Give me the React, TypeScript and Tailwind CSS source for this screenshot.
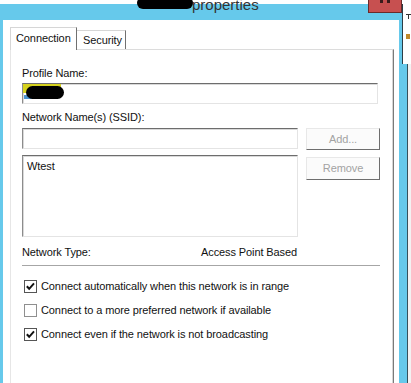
import React from "react";

const sunken =
  "border-t border-l border-r border-b border-t-[#6d6d6d] border-l-[#8c8c8c] border-r-[#e4e4e4] border-b-[#e4e4e4] shadow-[inset_1px_1px_0_#d9d9d9] bg-white";
const raised =
  "border border-t-[#e8e8e8] border-l-[#e8e8e8] border-r-[#6e6e6e] border-b-[#6e6e6e] bg-[#fbfbfb] text-[#a3a3a3] flex items-center justify-center";

function Check({ checked, label }: { checked: boolean; label: string }) {
  return (
    <div className="h-[24px] flex items-center">
      <div
        className={
          "ml-[2px] w-[13px] h-[13px] border bg-white flex items-center justify-center " +
          (checked ? "border-[#555555]" : "border-[#8f8f8f]")
        }
      >
        {checked && (
          <svg width="11" height="11" viewBox="0 0 11 11">
            <polyline points="1.8,5.2 4.2,7.8 9,2.4" fill="none" stroke="#111" strokeWidth="2" />
          </svg>
        )}
      </div>
      <span className="ml-[4px]">{label}</span>
    </div>
  );
}

export default function App() {
  return (
    <div className="relative w-[411px] h-[383px] overflow-hidden bg-white font-['Liberation_Sans',Arial,sans-serif] text-[11px] tracking-[-0.1px] leading-[13px] text-[#111]">
      <div className="flex flex-col h-full">
        <div className="h-[4px] shrink-0 bg-white" />
        <div className="flex flex-1 min-h-0">
          <div className="w-[408px] bg-[#66c9eb] border-r border-[#37505a] flex flex-col">
            <div className="h-[16px] shrink-0" />
            <div className="flex-1 ml-[3px] mr-[8px] bg-white flex flex-col pt-[7px] pl-[7px] pr-[5px]">
              {/* tabs */}
              <div className="flex h-[23px] mb-[-1px] relative z-10">
                <div className="w-[67px] h-[23px] bg-white border-t border-l border-r border-t-[#d6d6d6] border-l-[#d6d6d6] border-r-[#707070] pt-[4px] pl-[5px]">
                  Connection
                </div>
                <div className="w-[49px] h-[19px] mt-[3px] bg-white border-t border-r border-t-[#d6d6d6] border-r-[#707070] pt-[3px] pl-[6px]">
                  Security
                </div>
              </div>
              {/* panel */}
              <div className="flex-1 border-t border-l border-r border-t-[#dcdcdc] border-l-[#e6e6e6] border-r-[#7a7a7a] shadow-[inset_-1px_0_0_#d6d6d6] pl-[11px] flex flex-col">
                <div className="mt-[17px]">Profile Name:</div>
                <div className={"mt-[3px] w-[356px] h-[21px] relative " + sunken}>
                  <div className="absolute left-[0px] top-[0px] w-[38px] h-[9px] bg-[#d6d21e]" />
                  <div className="absolute left-[1px] top-[11px] w-[22px] h-[4px] bg-[#4d94d0]" />
                  <div className="absolute left-[3px] top-[2px] w-[38px] h-[13px] rounded-full bg-black" />
                </div>
                <div className="mt-[7px]">Network Name(s) (SSID):</div>
                <div className="mt-[4px] flex items-start">
                  <div className={"w-[276px] h-[21px] " + sunken} />
                  <div className={"ml-[8px] w-[74px] h-[22px] " + raised}>Add...</div>
                </div>
                <div className="mt-[5px] flex items-start">
                  <div className={"w-[276px] h-[82px] pt-[4px] pl-[4px] " + sunken}>Wtest</div>
                  <div className={"ml-[8px] mt-[2px] w-[74px] h-[23px] " + raised}>Remove</div>
                </div>
                <div className="mt-[9px] flex">
                  <span className="w-[179px]">Network Type:</span>
                  <span>Access Point Based</span>
                </div>
                <div className="mt-[6px] w-[358px] h-px bg-[#a6a6a6]" />
                <div className="mt-[8px] flex flex-col">
                  <Check checked label="Connect automatically when this network is in range" />
                  <Check checked={false} label="Connect to a more preferred network if available" />
                  <Check checked label="Connect even if the network is not broadcasting" />
                </div>
              </div>
            </div>
          </div>
          <div className="flex-1 bg-[#f2f2f2]" />
        </div>
      </div>

      {/* title overlay */}
      <div className="absolute left-[137px] top-[-3px] w-[56px] h-[12px] rounded-full bg-black" />
      <div className="absolute left-[192px] top-[-3px] text-[15px] leading-[15px] tracking-normal text-[#333]">
        properties
      </div>
      {/* close button */}
      <div className="absolute left-[368px] top-0 w-[34px] h-[13px] bg-[#c75050] border border-t-0 border-[#6b2a2a]">
        <div className="absolute left-[11px] top-0 w-[3px] h-[3px] bg-[#3a1a1a]" />
        <div className="absolute left-[18px] top-0 w-[3px] h-[3px] bg-[#3a1a1a]" />
      </div>
      {/* edge of another window */}
      <div className="absolute left-[402px] top-[4px] w-[9px] h-[60px] bg-white border-l border-[#2c3e46]">
        <div className="absolute left-[3px] top-[10px] w-[5px] h-px bg-[#333]" />
        <div className="absolute left-[5px] top-[10px] w-px h-[5px] bg-[#333]" />
        <div className="absolute left-[3px] top-[30px] w-[4px] h-[5px] bg-[#c0882a]" />
      </div>
    </div>
  );
}
